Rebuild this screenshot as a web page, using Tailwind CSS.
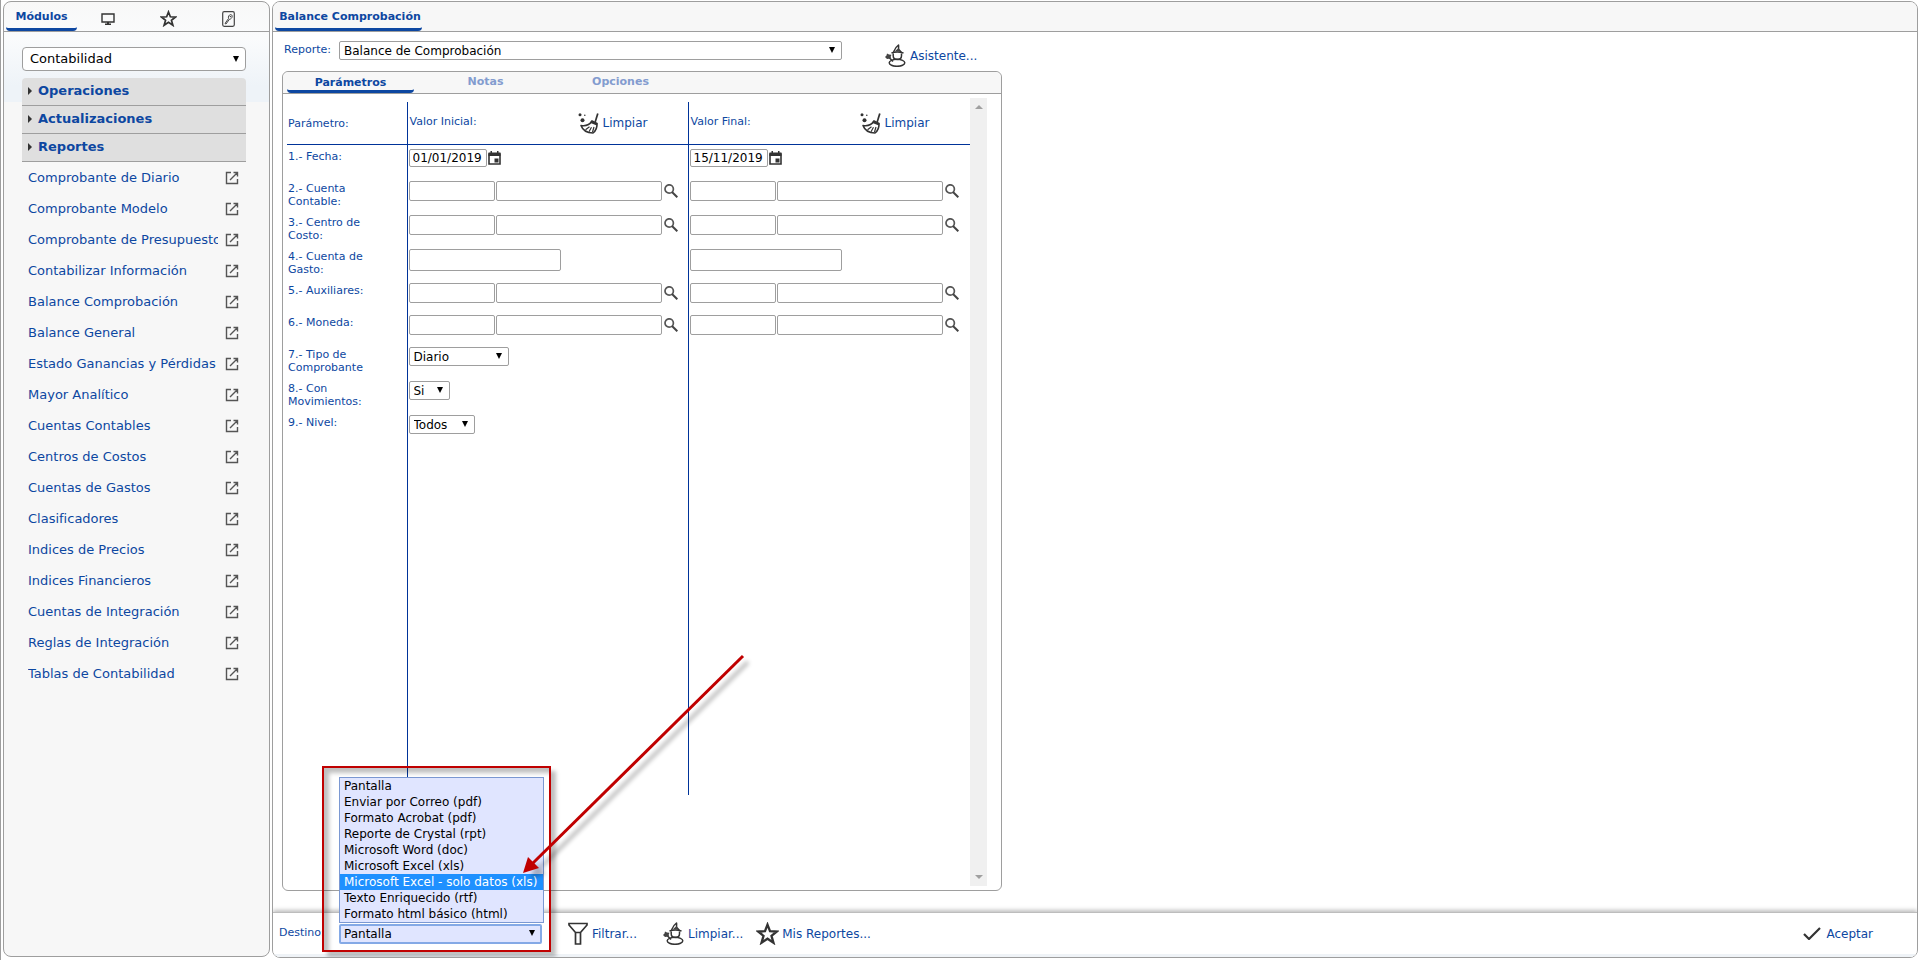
<!DOCTYPE html>
<html lang="es">
<head>
<meta charset="utf-8">
<title>Balance Comprobación</title>
<script src="https://cdn.jsdelivr.net/npm/@tailwindcss/browser@4"></script>
</head>
<body class="bg-white font-['DejaVu_Sans',Verdana,sans-serif] text-[#0d47a1]">
<svg class="hidden" aria-hidden="true">
  <symbol id="open" viewBox="0 0 14 14"><path d="M6 1.500H1.500v11h11V8M8.500 1.500h4v4M12.500 1.500L5 9" fill="none" stroke="#555" stroke-width="1.400"/></symbol>
  <symbol id="caret" viewBox="0 0 6 6"><path d="M0 0h6L3 6z" fill="#000"/></symbol>
  <symbol id="search" viewBox="0 0 14 14"><circle cx="5.200" cy="5" r="4.200" fill="none" stroke="#555" stroke-width="1.700"/><path d="M8 8l5.300 5.300" stroke="#444" stroke-width="2"/></symbol>
  <symbol id="cal" viewBox="0 0 13 14"><path d="M1 3h11v10H1z" fill="none" stroke="#333" stroke-width="1.600"/><path d="M.5 1.500h12V5H.5zM2.500 0h1.500v2H2.500zM9 0h1.500v2H9zM6.500 7.500h4v4h-4z" fill="#333"/></symbol>
  <symbol id="broom" viewBox="0 0 21 21"><path d="M19.800.5l-2.600 8.500" stroke="#333" stroke-width="1.700" fill="none"/><path d="M14 8l5 2.500c.3 4-1.200 7.200-4 9.500-5.500 0-10-2-12-7.500 4.500.8 8.500-.5 11-4.500z" fill="#fff" stroke="#333" stroke-width="1.600" stroke-linejoin="round"/><path d="M13.500 7.500l6 3-.7 2-6.800-2.800z" fill="#333"/><path d="M7.500 16.800l4-3M11 18.800l2.500-4.500M14.500 19l1.500-5" stroke="#333" stroke-width="1.200"/><circle cx="4.500" cy="7.200" r="2" fill="#333"/><circle cx="2" cy="1.800" r="1.500" fill="#333"/><circle cx="6.800" cy="2.300" r=".8" fill="#333"/></symbol>
  <symbol id="wizard" viewBox="0 0 21 23"><g fill="none" stroke="#333" stroke-width="1.500" stroke-linejoin="round"><path d="M8.500 8C9.500 5.500 10.500 3 13.500 1c.4 2-.3 3 .3 4.500L16.500 8.500"/><path d="M6.500 9c3.500-1.300 8-1.300 12 0"/><path d="M8.200 9.500v2.200c0 2.500 1.700 3.800 4.100 3.800s4.200-1.300 4.200-3.800V9.500"/><ellipse cx="12" cy="18.800" rx="7.800" ry="3.500"/><path d="M4 13.500l4 4"/></g><path d="M0 13l1.500-1.500.5-2 2 1 2.500.3-.8 2 .6 2.400-2.500-.4L2 15zM9.500 7.500l4-3.500 1.800 3.700z" fill="#444"/></symbol>
  <symbol id="star" viewBox="0 0 22 22"><path d="M11 2.500l2.400 6.300 6.600.3-5.200 4.200 1.900 6.500L11 16l-5.700 3.800 1.900-6.500L2 9.100l6.600-.3z" fill="none" stroke="#333" stroke-width="2.200"/></symbol>
</svg>
<div class="flex min-h-screen gap-[2px] border-l border-[#9e9e9e] pb-[2px] pl-[2px] pr-[3px] pt-px">

  <aside class="mb-px flex w-[267px] shrink-0 flex-col rounded-lg border border-[#9e9e9e] bg-[#f7f7f7] bg-[linear-gradient(#f8f8f8_0px,#fafbfc_36px,#eef3f8_84px,#eef3f8_100px,#f7f7f7_100px)]">
    <nav class="flex h-[30px] items-stretch border-b border-[#9e9e9e] pl-[2px]" aria-label="Secciones">
      <button class="w-[71px] rounded-sm border-b-3 border-[#0d47a1] pt-1 text-[11px] font-bold">Módulos</button>
      <button class="flex w-[60px] items-center justify-center pl-0.5 pt-1" aria-label="Escritorio"><svg class="h-[12px] w-[14px]" viewBox="0 0 14 12"><path d="M1 1h12v8H1z" fill="none" stroke="#333" stroke-width="1.400"/><path d="M4 10.500h6V12H4zM6 9h2v2H6z" fill="#333"/></svg></button>
      <button class="flex w-[60px] items-center justify-center pl-0.5 pt-1" aria-label="Favoritos"><svg class="size-[17px]"><use href="#star"/></svg></button>
      <button class="flex w-[60px] items-center justify-center pl-0.5 pt-1" aria-label="Herramientas"><svg class="h-[16px] w-[13px]" viewBox="0 0 13 16"><rect x=".7" y=".7" width="11.600" height="14.600" rx="1.500" fill="none" stroke="#444" stroke-width="1.200"/><path d="M3 12.500l3.500-5c-.5-2 .5-3.500 2-4 1 0 1.800.8 1.700 2-.2 1.500-1.400 2.700-2.700 2.700L4 13z" fill="none" stroke="#444"/><circle cx="8.500" cy="5.500" r=".8" fill="#444"/></svg></button>
    </nav>
    <div class="flex flex-col pl-[18px] pr-[23px] pt-[15px]">
      <div class="relative">
        <select class="block h-6 w-full appearance-none rounded-sm border border-[#9e9e9e] bg-white pl-[7px] text-[13px] text-black" aria-label="Módulo"><option>Contabilidad</option></select>
        <svg class="pointer-events-none absolute right-[7px] top-[9px] size-[6px]"><use href="#caret"/></svg>
      </div>
      <div class="mt-[7px] flex flex-col text-[13px] font-bold">
        <button class="flex h-7 items-center gap-1.5 rounded-t-sm border-b border-[#9e9e9e] bg-[#dfdfdf] pb-0.5 pl-1.5"><svg class="h-[8px] w-[4px]" viewBox="0 0 4 8"><path d="M0 0l4 4-4 4z" fill="#333"/></svg>Operaciones</button>
        <button class="flex h-7 items-center gap-1.5 border-b border-[#9e9e9e] bg-[#dfdfdf] pb-0.5 pl-1.5"><svg class="h-[8px] w-[4px]" viewBox="0 0 4 8"><path d="M0 0l4 4-4 4z" fill="#333"/></svg>Actualizaciones</button>
        <button class="flex h-7 items-center gap-1.5 border-b border-[#9e9e9e] bg-[#dfdfdf] pb-0.5 pl-1.5"><svg class="h-[8px] w-[4px]" viewBox="0 0 4 8"><path d="M0 0l4 4-4 4z" fill="#333"/></svg>Reportes</button>
      </div>
      <ul id="menu" class="pl-1.5 pr-[7px] text-[13px]"></ul>
    </div>
  </aside>

  <main class="flex min-w-0 flex-1 flex-col overflow-hidden rounded-lg border border-[#9e9e9e] bg-white">
    <div class="flex h-[30px] shrink-0 border-b border-[#9e9e9e] bg-[#f7f7f7] pl-[2px]">
      <button class="w-[147px] whitespace-nowrap rounded-sm border-b-3 border-[#0d47a1] pl-[3px] pt-1 text-[11px] font-bold">Balance Comprobación</button>
    </div>
    <div class="flex h-[39px] shrink-0 items-start pl-[11px] pt-[9px]">
      <label for="rep" class="w-[55px] pt-px text-[11px] leading-4">Reporte:</label>
      <div class="relative w-[503px]">
        <select id="rep" class="block h-[19px] w-full appearance-none rounded-xs border border-[#9e9e9e] bg-white pl-1 text-[12px] leading-4 text-black"><option>Balance de Comprobación</option></select>
        <svg class="pointer-events-none absolute right-[7px] top-[6px] size-[6px]"><use href="#caret"/></svg>
      </div>
      <a href="#" class="ml-[43px] flex items-center gap-1 pt-[3px] text-[12px]"><svg class="h-[23px] w-[21px]"><use href="#wizard"/></svg>Asistente...</a>
    </div>

    <section class="ml-[9px] flex w-[720px] flex-1 flex-col rounded-md border border-[#9e9e9e]">
      <div class="flex h-[22px] shrink-0 gap-2 rounded-t-md border-b border-[#9e9e9e] bg-[#f7f7f7] pl-1 text-[11px] font-bold" role="tablist">
        <button role="tab" aria-selected="true" class="w-[127px] rounded-sm border-b-3 border-[#0d47a1] pt-[3px]">Parámetros</button>
        <button role="tab" class="w-[127px] text-[#839ccf]">Notas</button>
        <button role="tab" class="w-[127px] text-[#839ccf]">Opciones</button>
      </div>
      <div class="flex flex-1 pb-1 pl-1 pt-1">
        <table class="mt-1 w-[683px] table-fixed border-collapse self-start text-left align-top text-[11px] leading-[13px]">
          <colgroup><col class="w-[120px]"><col class="w-[281px]"><col class="w-[282px]"></colgroup>
          <thead>
            <tr class="h-[42px] border-b border-[#003399]">
              <th class="pl-px pt-0.5 font-normal">Parámetro:</th>
              <th class="border-l border-[#003399] pl-0.5 pt-0.5 font-normal"><div class="flex items-center"><span class="w-[168px] pb-1">Valor Inicial:</span><button class="flex items-center gap-1 text-[12px]"><svg class="size-[21px]"><use href="#broom"/></svg>Limpiar</button></div></th>
              <th class="border-l border-[#003399] pl-0.5 pt-0.5 font-normal"><div class="flex items-center"><span class="w-[169px] pb-1">Valor Final:</span><button class="flex items-center gap-1 text-[12px]"><svg class="size-[21px]"><use href="#broom"/></svg>Limpiar</button></div></th>
            </tr>
          </thead>
          <tbody id="rows"></tbody>
        </table>
        <div class="flex w-[17px] flex-col items-center justify-between bg-[#f0f0f0] py-[7px]">
          <svg class="h-[4px] w-[8px]" viewBox="0 0 8 4"><path d="M0 4h8L4 0z" fill="#a0a0a0"/></svg>
          <svg class="h-[4px] w-[8px]" viewBox="0 0 8 4"><path d="M0 0h8L4 4z" fill="#a0a0a0"/></svg>
        </div>
      </div>
    </section>

    <footer class="mt-[21px] flex h-[45px] shrink-0 items-start border-b-3 border-t border-[#eff3f7] border-t-[#bdbdbd] bg-white pl-[6px] pr-[44px] pt-[11px] text-[12px] shadow-[0_-2px_4px_rgba(0,0,0,0.25)]">
      <label for="dest" class="w-[60px] pt-px text-[11px] leading-4">Destino:</label>
      <div class="relative w-[203px]">
        <select id="dest" class="block h-5 w-full appearance-none rounded-xs border-2 border-[#84a9e6] bg-[#e0e5ff] pl-[3px] text-[12px] leading-4 text-black"><option>Pantalla</option></select>
        <svg class="pointer-events-none absolute right-[7px] top-[6px] size-[6px]"><use href="#caret"/></svg>
        <ul role="listbox" aria-label="Destino" class="absolute bottom-full left-0 mb-px w-[205px] whitespace-nowrap border border-[#7b98d2] bg-[#e0e5ff] text-[12px] leading-4 text-black">
          <li role="option" class="pl-1">Pantalla</li>
          <li role="option" class="pl-1">Enviar por Correo (pdf)</li>
          <li role="option" class="pl-1">Formato Acrobat (pdf)</li>
          <li role="option" class="pl-1">Reporte de Crystal (rpt)</li>
          <li role="option" class="pl-1">Microsoft Word (doc)</li>
          <li role="option" class="pl-1">Microsoft Excel (xls)</li>
          <li role="option" aria-selected="true" class="bg-[#1e90ff] pl-1 text-white">Microsoft Excel - solo datos (xls)</li>
          <li role="option" class="pl-1">Texto Enriquecido (rtf)</li>
          <li role="option" class="pl-1">Formato html básico (html)</li>
        </ul>
        <div class="pointer-events-none absolute -bottom-2 -left-[17px] h-[186px] w-[229px] border-2 border-[#c00000] shadow-[5px_5px_4px_rgba(0,0,0,0.25),inset_5px_5px_4px_rgba(0,0,0,0.25)]"></div>
        <svg class="pointer-events-none absolute bottom-[60px] left-[181px] h-[240px] w-[240px]" viewBox="0 0 240 240" aria-hidden="true">
          <g class="opacity-25 blur-[2px]" transform="translate(5 6)"><path d="M223 12L16 217" stroke="#000" stroke-width="4"/><path d="M5 229l6-16 10 11z" fill="#000"/></g>
          <path d="M223 12L12 220" stroke="#c00000" stroke-width="3"/><path d="M3 229l5-16 11 11z" fill="#c00000"/>
        </svg>
      </div>
      <button class="-mt-0.5 ml-[26px] flex items-center gap-1"><svg class="h-[23px] w-[20px]" viewBox="0 0 20 23"><path d="M1 1.500h18v1.500l-6.500 7.500V22h-5V10.500L1 3zM7.500 10.500h5" fill="none" stroke="#333" stroke-width="1.700"/></svg>Filtrar...</button>
      <button class="-mt-0.5 ml-[26px] flex items-center gap-1"><svg class="h-[23px] w-[21px]"><use href="#wizard"/></svg>Limpiar...</button>
      <button class="-mt-0.5 ml-[13px] flex items-center gap-[3px]"><svg class="size-[23px]"><use href="#star"/></svg>Mis Reportes...</button>
      <button class="-mt-0.5 ml-auto flex h-[23px] items-center gap-[5px]"><svg class="h-[13px] w-[18px]" viewBox="0 0 18 13"><path d="M1 7l5 5L17 1" fill="none" stroke="#333" stroke-width="2.200"/></svg>Aceptar</button>
    </footer>
  </main>
</div>
<script>
const items = ["Comprobante de Diario","Comprobante Modelo","Comprobante de Presupuesto","Contabilizar Información","Balance Comprobación","Balance General","Estado Ganancias y Pérdidas","Mayor Analítico","Cuentas Contables","Centros de Costos","Cuentas de Gastos","Clasificadores","Indices de Precios","Indices Financieros","Cuentas de Integración","Reglas de Integración","Tablas de Contabilidad"];
document.getElementById("menu").innerHTML = items.map(t => `<li class="flex h-[31px] items-center justify-between"><a href="#" class="w-[190px] overflow-hidden whitespace-nowrap">${t}</a><a href="#" aria-label="Abrir ${t}"><svg class="size-[14px]"><use href="#open"/></svg></a></li>`).join("");

const box = "rounded-xs border border-[#9e9e9e] bg-white";
const date = (v, l) => `<div class="flex items-center gap-px"><input class="${box} h-[18px] w-[78px] pl-[3px] text-[12px] text-black" value="${v}" aria-label="${l}"><button aria-label="Calendario"><svg class="block h-[14px] w-[13px]"><use href="#cal"/></svg></button></div>`;
const lookup = l => `<div class="flex items-center gap-px"><input class="${box} h-5 w-[86px]" aria-label="${l} código"><input class="${box} h-5 w-[166px]" aria-label="${l} descripción"><button class="pl-px" aria-label="Buscar"><svg class="block size-[14px]"><use href="#search"/></svg></button></div>`;
const text = l => `<input class="${box} block h-[22px] w-[152px]" aria-label="${l}">`;
const pick = (v, w, l) => `<div class="relative ${w}"><select class="${box} block h-[19px] w-full appearance-none pl-1 text-[12px] leading-4 text-black" aria-label="${l}"><option>${v}</option></select><svg class="pointer-events-none absolute right-[7px] top-[6px] size-[6px]"><use href="#caret"/></svg></div>`;
const rows = [
  ["1.- Fecha:", "h-[33px]", date("01/01/2019","Fecha inicial"), date("15/11/2019","Fecha final")],
  ["2.- Cuenta<br>Contable:", "h-[34px]", lookup("Cuenta inicial"), lookup("Cuenta final")],
  ["3.- Centro de<br>Costo:", "h-[34px]", lookup("Centro inicial"), lookup("Centro final")],
  ["4.- Cuenta de<br>Gasto:", "h-[34px]", text("Gasto inicial"), text("Gasto final")],
  ["5.- Auxiliares:", "h-8", lookup("Auxiliar inicial"), lookup("Auxiliar final")],
  ["6.- Moneda:", "h-8", lookup("Moneda inicial"), lookup("Moneda final")],
  ["7.- Tipo de<br>Comprobante", "h-[34px]", pick("Diario","w-[100px]","Tipo de comprobante"), ""],
  ["8.- Con<br>Movimientos:", "h-[34px]", pick("Si","w-[41px]","Con movimientos"), ""],
  ["9.- Nivel:", "h-[384px]", pick("Todos","w-[66px]","Nivel"), ""]
];
document.getElementById("rows").innerHTML = rows.map(r => `<tr class="${r[1]} align-top"><td class="whitespace-nowrap pl-px pt-[5px]">${r[0]}</td><td class="border-l border-[#003399] pl-px pt-1">${r[2]}</td><td class="border-l border-[#003399] pl-px pt-1">${r[3]}</td></tr>`).join("");
</script>
</body>
</html>
